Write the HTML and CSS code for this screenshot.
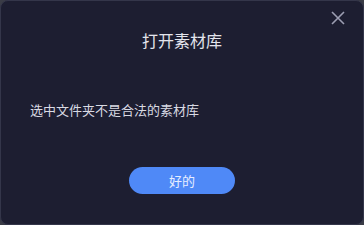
FILE: index.html
```html
<!DOCTYPE html>
<html lang="zh-CN">
<head>
<meta charset="utf-8">
<title>打开素材库</title>
<link rel="stylesheet" href="styles.css">
</head>
<body>
<div class="dialog">
  <button class="close" aria-label="关闭">
    <svg width="14" height="14" viewBox="0 0 14 14"><path d="M1 1L13 13M13 1L1 13" stroke="currentColor" stroke-width="1.6" fill="none"/></svg>
  </button>
  <div class="title">打开素材库</div>
  <div class="message">选中文件夹不是合法的素材库</div>
  <div class="actions">
    <button class="ok">好的</button>
  </div>
</div>
</body>
</html>
```
FILE: styles.css
```css
html, body {
  margin: 0;
  padding: 0;
  background: #3a3c46;
}
body {
  width: 364px;
  height: 225px;
  font-family: "Noto Sans CJK SC", "Noto Sans", sans-serif;
}
.dialog {
  position: relative;
  box-sizing: border-box;
  width: 364px;
  height: 225px;
  background: #1d1e31;
  border: 1px solid #34364a;
  border-radius: 8px;
  padding-top: 28px;
  display: flex;
  flex-direction: column;
}
.close {
  position: absolute;
  top: 10px;
  right: 18px;
  width: 14px;
  height: 14px;
  padding: 0;
  border: 0;
  background: none;
  color: #9c9eb2;
  display: flex;
}
.title {
  text-align: center;
  font-size: 16px;
  line-height: 22px;
  color: #e4e5ec;
}
.message {
  margin-top: 49px;
  padding-left: 29px;
  font-size: 13px;
  line-height: 20px;
  color: #d9dae3;
}
.actions {
  margin-top: 47px;
  display: flex;
  justify-content: center;
}
.ok {
  width: 106px;
  height: 27px;
  border: 0;
  border-radius: 14px;
  background: #4f89f7;
  color: #e6edff;
  font-family: inherit;
  font-size: 13px;
  padding: 0;
}
```
